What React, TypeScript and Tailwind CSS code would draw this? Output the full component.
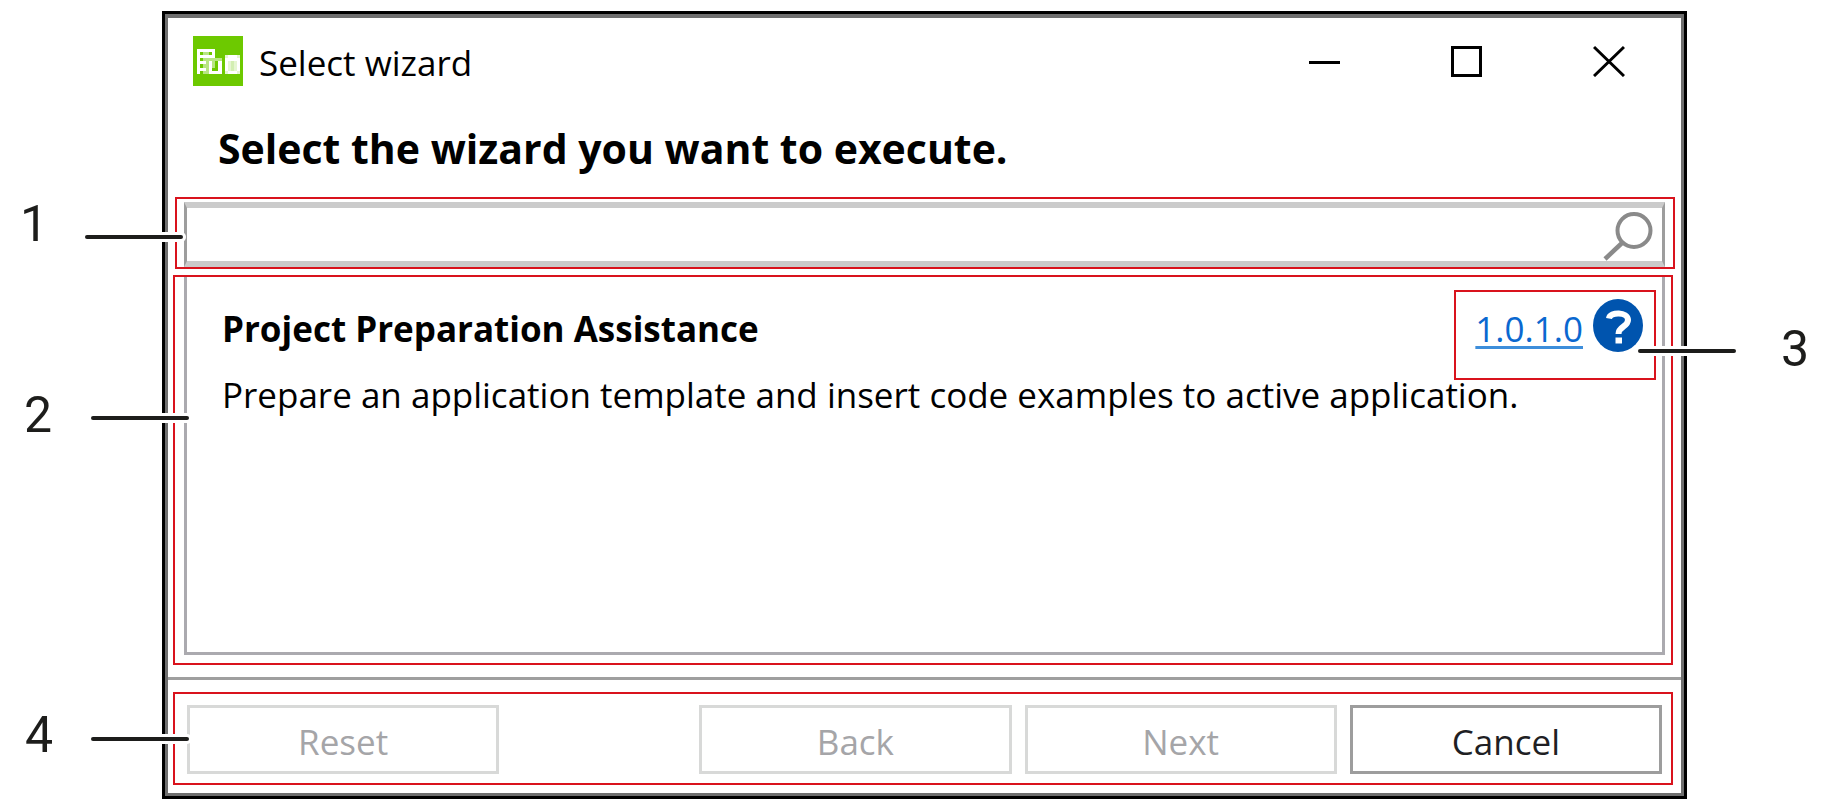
/**
 * App.tsx — "Select wizard" dialog with numbered callouts
 *
 * The dialog sits between two margins that hold the callout numbers.
 * Each highlighted region is a red frame; callout lines lie over it.
 */

import { useState } from "react";
import type { ReactNode } from "react";

interface CalloutProps {
  label: string;
  labelClass: string;
  lineClass: string;
}

function Callout({ label, labelClass, lineClass }: CalloutProps) {
  return (
    <>
      <span
        className={`absolute font-['Roboto','Liberation_Sans',sans-serif] text-[50px] leading-[50px] text-[#1d1d1b] ${labelClass}`}
      >
        {label}
      </span>
      <span
        className={`absolute h-1 w-[98px] rounded-full bg-[#1d1d1b] ring-3 ring-white ${lineClass}`}
      />
    </>
  );
}

function Frame({ className, children }: { className: string; children: ReactNode }) {
  return <section className={`relative border-2 border-[#d9131d] ${className}`}>{children}</section>;
}

function AppIcon() {
  return (
    <svg className="size-[50px]" viewBox="0 0 50 50" shapeRendering="crispEdges" aria-hidden="true">
      <rect width="50" height="50" fill="#6dc900" />
      <g fill="#b8e583">
        <path d="M10 16h6v3h-6zM10 22h19v3H10zM13 25h3v7h-3zM10 28h6v4h-6zM13 32h3v3h-3zM10 35h6v3h-6zM19 25h3v7h-3z" />
      </g>
      <g fill="#fff">
        <path d="M4 13h3v25H4zM7 13h15v3H7zM19 16h3v3h-3zM7 19h15v3H7z" />
        <path d="M7 25h6v3H7zM7 32h6v3H7z" />
        <path d="M16 25h3v13h-3zM19 35h10v3H19zM25 25h4v10h-4z" />
        <path d="M32 19h15v19H32z" />
      </g>
      <path d="M32 19h3v3h-3zM44 19h3v3h-3zM35 25h9v10h-9zM32 35h3v3h-3zM44 35h3v3h-3z" fill="#e6f6d2" />
      <path d="M38 25h3v10h-3z" fill="#d3eeb2" />
    </svg>
  );
}

function SearchIcon() {
  return (
    <svg className="h-[52px] w-[54px]" viewBox="0 0 54 52" fill="none" stroke="#8a8a8a" aria-hidden="true">
      <circle cx="34" cy="21.5" r="16.500" strokeWidth="4" />
      <path d="M22 34 5 50" strokeWidth="4.500" />
    </svg>
  );
}

function HelpIcon() {
  return (
    <svg className="h-[53px] w-[50px]" viewBox="0 0 50 53" aria-hidden="true">
      <ellipse cx="25" cy="26.5" rx="25" ry="26.5" fill="#0054ae" />
      <path d="M16 19.500c1-7 19-7 19 1.500 0 7-9.500 6-9.500 14" fill="none" stroke="#fff" strokeWidth="6" />
      <path d="M22.500 38.500h6.500v6h-6.500z" fill="#fff" />
    </svg>
  );
}

const BUTTON =
  "h-[69px] flex-1 border-3 text-[35px] leading-[46px] pt-[5px] enabled:border-[#9d9d9d] enabled:text-[#1f1f24] disabled:border-[#d8d9d8] disabled:text-[#a5a5a8]";

export default function App() {
  const [query, setQuery] = useState("");

  return (
    <div className="flex min-h-screen bg-white pt-[11px] pr-[147px] pb-[11px] pl-[162px] font-['Open_Sans','Noto_Sans',sans-serif] text-black">
      <main className="flex flex-1 flex-col border-3 border-black">
        <div className="flex flex-1 flex-col border-3 border-t-4 border-[#6f6f6f]">
          {/* Title bar */}
          <header className="flex items-start pt-[18px] pl-[25px]">
            <AppIcon />
            <span className="ml-4 flex-1 text-[35px] leading-[54px]">Select wizard</span>
            <div className="flex gap-[110px] pt-[9px] pr-14">
              <button type="button" aria-label="Minimize">
                <svg className="size-8" viewBox="0 0 32 32" stroke="#000" strokeWidth="3">
                  <path d="M0 17.500h31" />
                </svg>
              </button>
              <button type="button" aria-label="Maximize">
                <svg className="size-8" viewBox="0 0 32 32" fill="none" stroke="#000" strokeWidth="3">
                  <path d="M1.500 2.500h28v28h-28z" />
                </svg>
              </button>
              <button type="button" aria-label="Close">
                <svg className="size-8" viewBox="0 0 32 32" stroke="#000" strokeWidth="3">
                  <path d="m1 2 30 29M31 2 1 31" />
                </svg>
              </button>
            </div>
          </header>

          <h1 className="mt-[31px] pl-[50px] text-[41px] leading-[54px] font-bold">
            Select the wizard you want to execute.
          </h1>

          {/* Search */}
          <Frame className="mt-[22px] mr-[6px] ml-[7px] pt-[3px] pr-2 pl-[7px]">
            <div className="flex h-[65px] items-center border-x-3 border-y-6 border-x-[#9d9d9d] border-y-[#cbcbcb]">
              <input
                type="text"
                aria-label="Search wizards"
                value={query}
                onChange={(e) => setQuery(e.target.value)}
                className="h-full min-w-0 flex-1 px-3 text-[35px] outline-none"
              />
              <button type="button" aria-label="Search" className="mr-2">
                <SearchIcon />
              </button>
            </div>
            <Callout label="1" labelClass="left-[-157px] top-0" lineClass="left-[-92px] top-9" />
          </Frame>

          {/* Wizard list */}
          <Frame className="mt-[6px] mr-2 ml-[5px] flex flex-1 flex-col pr-[6px] pb-2 pl-[9px]">
            <article className="flex-1 border-x-3 border-b-3 border-[#abaaaf] pl-[35px]">
              <div className="flex items-start justify-between pt-[13px] pr-[6px]">
                <h2 className="pt-3 text-[35px] leading-[54px] font-bold">Project Preparation Assistance</h2>
                <Frame className="flex h-[90px] w-[202px] items-start justify-end gap-[10px] pt-[7px] pr-[11px]">
                  <a
                    href="#version"
                    className="mt-[3px] text-[35px] leading-[54px] text-[#0a68d0] underline decoration-[#3d8edb] decoration-3 underline-offset-4"
                  >
                    1.0.1.0
                  </a>
                  <button type="button" aria-label="Help">
                    <HelpIcon />
                  </button>
                  <Callout label="3" labelClass="left-[325px] top-[32px]" lineClass="left-[182px] top-[57px]" />
                </Frame>
              </div>
              <p className="-mt-3 text-[35px] leading-[54px]">
                Prepare an application template and insert code examples to active application.
              </p>
            </article>
            <Callout label="2" labelClass="left-[-151px] top-[113px]" lineClass="left-[-84px] top-[139px]" />
          </Frame>

          {/* Footer buttons */}
          <footer className="mt-3 border-t-3 border-[#9f9f9f] pt-3 pr-2 pb-2 pl-[5px]">
            <Frame className="flex gap-[13px] pt-[11px] pr-[9px] pb-[9px] pl-3">
              <button type="button" disabled className={BUTTON}>
                Reset
              </button>
              <span className="w-[174px]" />
              <button type="button" disabled className={BUTTON}>
                Back
              </button>
              <button type="button" disabled className={BUTTON}>
                Next
              </button>
              <button type="button" className={BUTTON}>
                Cancel
              </button>
              <Callout label="4" labelClass="left-[-150px] top-[16px]" lineClass="left-[-84px] top-[43px]" />
            </Frame>
          </footer>
        </div>
      </main>
    </div>
  );
}
